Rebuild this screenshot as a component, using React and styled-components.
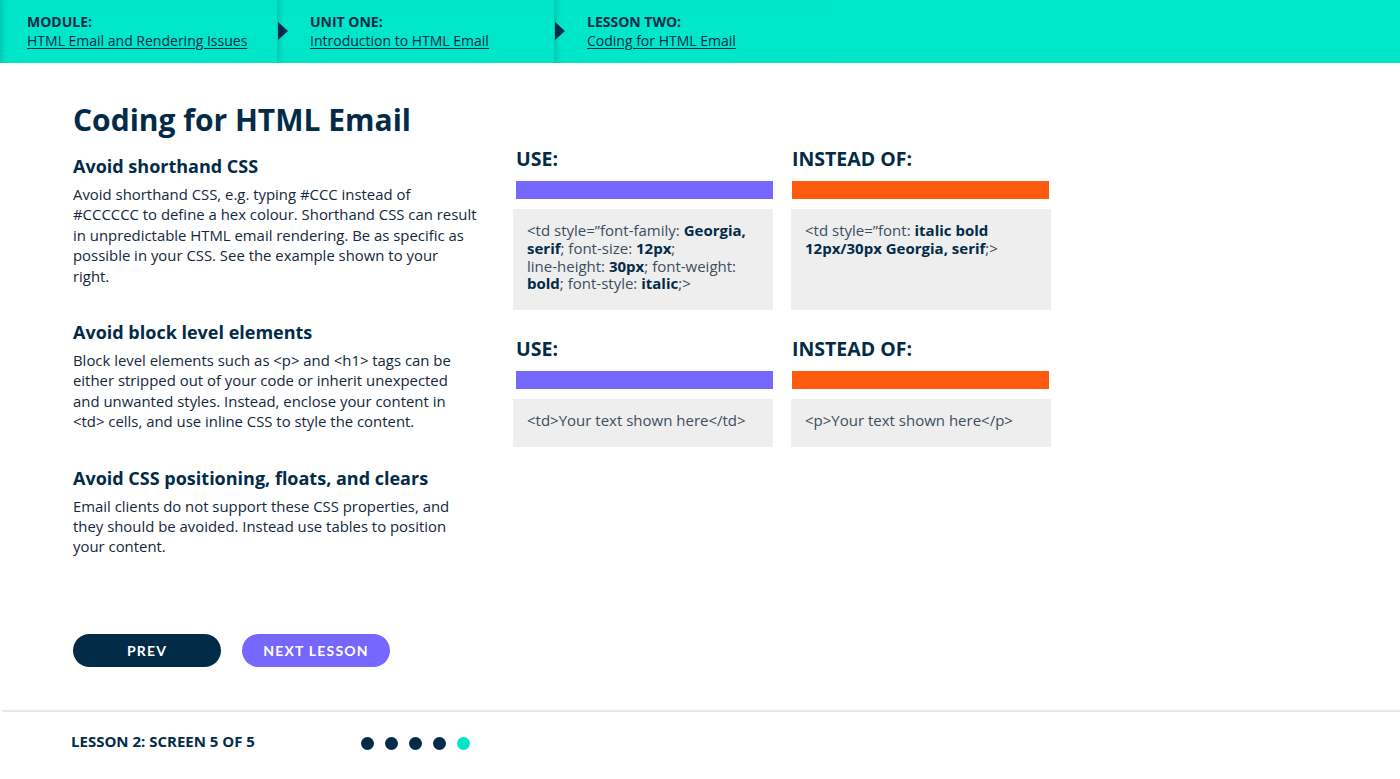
import React from "react";
import styled, { createGlobalStyle } from "styled-components";

const GlobalStyle = createGlobalStyle`
  html, body { margin: 0; padding: 0; background: #fff; }
  body { font-family: "Open Sans", "Noto Sans", sans-serif; color: #0b2d48; }
  * { box-sizing: border-box; }
`;

const NAVY = "#022b48";
const TEAL = "#00e6ca";
const PURPLE = "#7667ff";
const ORANGE = "#ff5b10";

const Header = styled.header`
  display: flex;
  height: 63px;
  background: ${TEAL};
`;

const Crumb = styled.div`
  position: relative;
  width: 277px;
  height: 100%;
  padding: 12px 0 0 ${(p) => (p.$arrow ? 33 : 27)}px;
  box-shadow: inset 7px 0 6px -5px rgba(0, 60, 60, 0.22);
  &::before {
    content: "";
    display: ${(p) => (p.$arrow ? "block" : "none")};
    position: absolute;
    left: 1px;
    top: 22px;
    border-left: 10px solid ${NAVY};
    border-top: 9px solid transparent;
    border-bottom: 9px solid transparent;
  }
`;

const CrumbLabel = styled.div`
  font-size: 14px;
  font-weight: 700;
  line-height: 19px;
  color: ${NAVY};
`;

const CrumbLink = styled.a`
  display: block;
  font-size: 14px;
  line-height: 20px;
  color: ${NAVY};
  text-decoration: underline;
  text-underline-offset: 2px;
`;

const Main = styled.main`
  height: 647px;
  padding: 37px 0 0 73px;
  display: flex;
  flex-direction: column;
`;

const Title = styled.h1`
  margin: 0;
  font-size: 30px;
  line-height: 40px;
  font-weight: 700;
  color: ${NAVY};
`;

const Columns = styled.div`
  display: flex;
`;

const Left = styled.div`
  width: 405px;
  margin-right: 35px;
  padding-top: 14px;
  display: flex;
  flex-direction: column;
  gap: 34px;
`;

const Section = styled.section``;

const SubHeading = styled.h2`
  margin: 0 0 6px;
  font-size: 18px;
  line-height: 24px;
  font-weight: 700;
  color: ${NAVY};
`;

const Body = styled.p`
  margin: 0;
  font-size: 14.9px;
  line-height: 20.4px;
  color: #13283b;
`;

const Right = styled.div`
  margin-top: 6px;
  display: grid;
  grid-template-columns: 260px 260px;
  column-gap: 18px;
  row-gap: 26px;
  align-content: start;
`;

const Example = styled.div`
  display: flex;
  flex-direction: column;
`;

const ExLabel = styled.div`
  font-size: 19.5px;
  line-height: 26px;
  font-weight: 700;
  color: ${NAVY};
  padding-left: ${(p) => (p.$tone === "bad" ? 1 : 3)}px;
  margin-bottom: 9px;
`;

const Bar = styled.div`
  height: 18px;
  margin: ${(p) => (p.$tone === "bad" ? "0 2px 0 1px" : "0 0 0 3px")};
  background: ${(p) => (p.$tone === "bad" ? ORANGE : PURPLE)};
`;

const CodeBox = styled.div`
  margin-top: 10px;
  min-height: ${(p) => p.$h}px;
  background: #eeeeee;
  padding: 13px 10px 10px 14px;
  font-size: 15px;
  line-height: 17.8px;
  color: #3c4d5e;
  b { color: ${NAVY}; font-weight: 700; }
`;

const Buttons = styled.div`
  margin-top: auto;
  margin-bottom: 43px;
  display: flex;
  gap: 21px;
`;

const Btn = styled.button`
  width: 148px;
  height: 33px;
  border: none;
  border-radius: 17px;
  background: ${(p) => (p.$variant === "next" ? PURPLE : NAVY)};
  color: #fff;
  font-family: "Lato", "Open Sans", sans-serif;
  font-weight: 700;
  font-size: 14px;
  letter-spacing: 1.2px;
  padding: 0;
`;

const Footer = styled.footer`
  border-top: 2px solid #e8e8e8;
  margin-left: 2px;
  height: 69px;
  display: flex;
  align-items: center;
  padding: 0 0 10px 69px;
`;

const FooterText = styled.div`
  width: 290px;
  font-size: 15px;
  font-weight: 700;
  color: ${NAVY};
`;

const Dots = styled.div`
  display: flex;
  gap: 11px;
  margin-top: 5px;
`;

const Dot = styled.span`
  width: 13px;
  height: 13px;
  border-radius: 50%;
  background: ${(p) => (p.$active ? TEAL : NAVY)};
`;

export default function App() {
  return (
    <>
      <GlobalStyle />
      <Header>
        <Crumb>
          <CrumbLabel>MODULE:</CrumbLabel>
          <CrumbLink>HTML Email and Rendering Issues</CrumbLink>
        </Crumb>
        <Crumb $arrow>
          <CrumbLabel>UNIT ONE:</CrumbLabel>
          <CrumbLink>Introduction to HTML Email</CrumbLink>
        </Crumb>
        <Crumb $arrow>
          <CrumbLabel>LESSON TWO:</CrumbLabel>
          <CrumbLink>Coding for HTML Email</CrumbLink>
        </Crumb>
      </Header>
      <Main>
        <Title>Coding for HTML Email</Title>
        <Columns>
          <Left>
            <Section>
              <SubHeading>Avoid shorthand CSS</SubHeading>
              <Body>
                Avoid shorthand CSS, e.g. typing #CCC instead of #CCCCCC to define a hex colour. Shorthand CSS can
                result in unpredictable HTML email rendering. Be as specific as possible in your CSS. See the example
                shown to your right.
              </Body>
            </Section>
            <Section>
              <SubHeading>Avoid block level elements</SubHeading>
              <Body>
                Block level elements such as &lt;p&gt; and &lt;h1&gt; tags can be either stripped out of your code or
                inherit unexpected and unwanted styles. Instead, enclose your content in &lt;td&gt; cells, and use
                inline CSS to style the content.
              </Body>
            </Section>
            <Section>
              <SubHeading>Avoid CSS positioning, floats, and clears</SubHeading>
              <Body>
                Email clients do not support these CSS properties, and they should be avoided. Instead use tables to
                position your content.
              </Body>
            </Section>
          </Left>
          <Right>
            <Example>
              <ExLabel>USE:</ExLabel>
              <Bar />
              <CodeBox $h={101}>
                &lt;td style=”font-family: <b>Georgia,</b>
                <br />
                <b>serif</b>; font-size: <b>12px</b>;
                <br />
                line-height: <b>30px</b>; font-weight:
                <br />
                <b>bold</b>; font-style: <b>italic</b>;&gt;
              </CodeBox>
            </Example>
            <Example>
              <ExLabel $tone="bad">INSTEAD OF:</ExLabel>
              <Bar $tone="bad" />
              <CodeBox $h={101}>
                &lt;td style=”font: <b>italic bold</b>
                <br />
                <b>12px/30px Georgia, serif</b>;&gt;
              </CodeBox>
            </Example>
            <Example>
              <ExLabel>USE:</ExLabel>
              <Bar />
              <CodeBox $h={48}>&lt;td&gt;Your text shown here&lt;/td&gt;</CodeBox>
            </Example>
            <Example>
              <ExLabel $tone="bad">INSTEAD OF:</ExLabel>
              <Bar $tone="bad" />
              <CodeBox $h={48}>&lt;p&gt;Your text shown here&lt;/p&gt;</CodeBox>
            </Example>
          </Right>
        </Columns>
        <Buttons>
          <Btn>PREV</Btn>
          <Btn $variant="next">NEXT LESSON</Btn>
        </Buttons>
      </Main>
      <Footer>
        <FooterText>LESSON 2: SCREEN 5 OF 5</FooterText>
        <Dots>
          <Dot />
          <Dot />
          <Dot />
          <Dot />
          <Dot $active />
        </Dots>
      </Footer>
    </>
  );
}
